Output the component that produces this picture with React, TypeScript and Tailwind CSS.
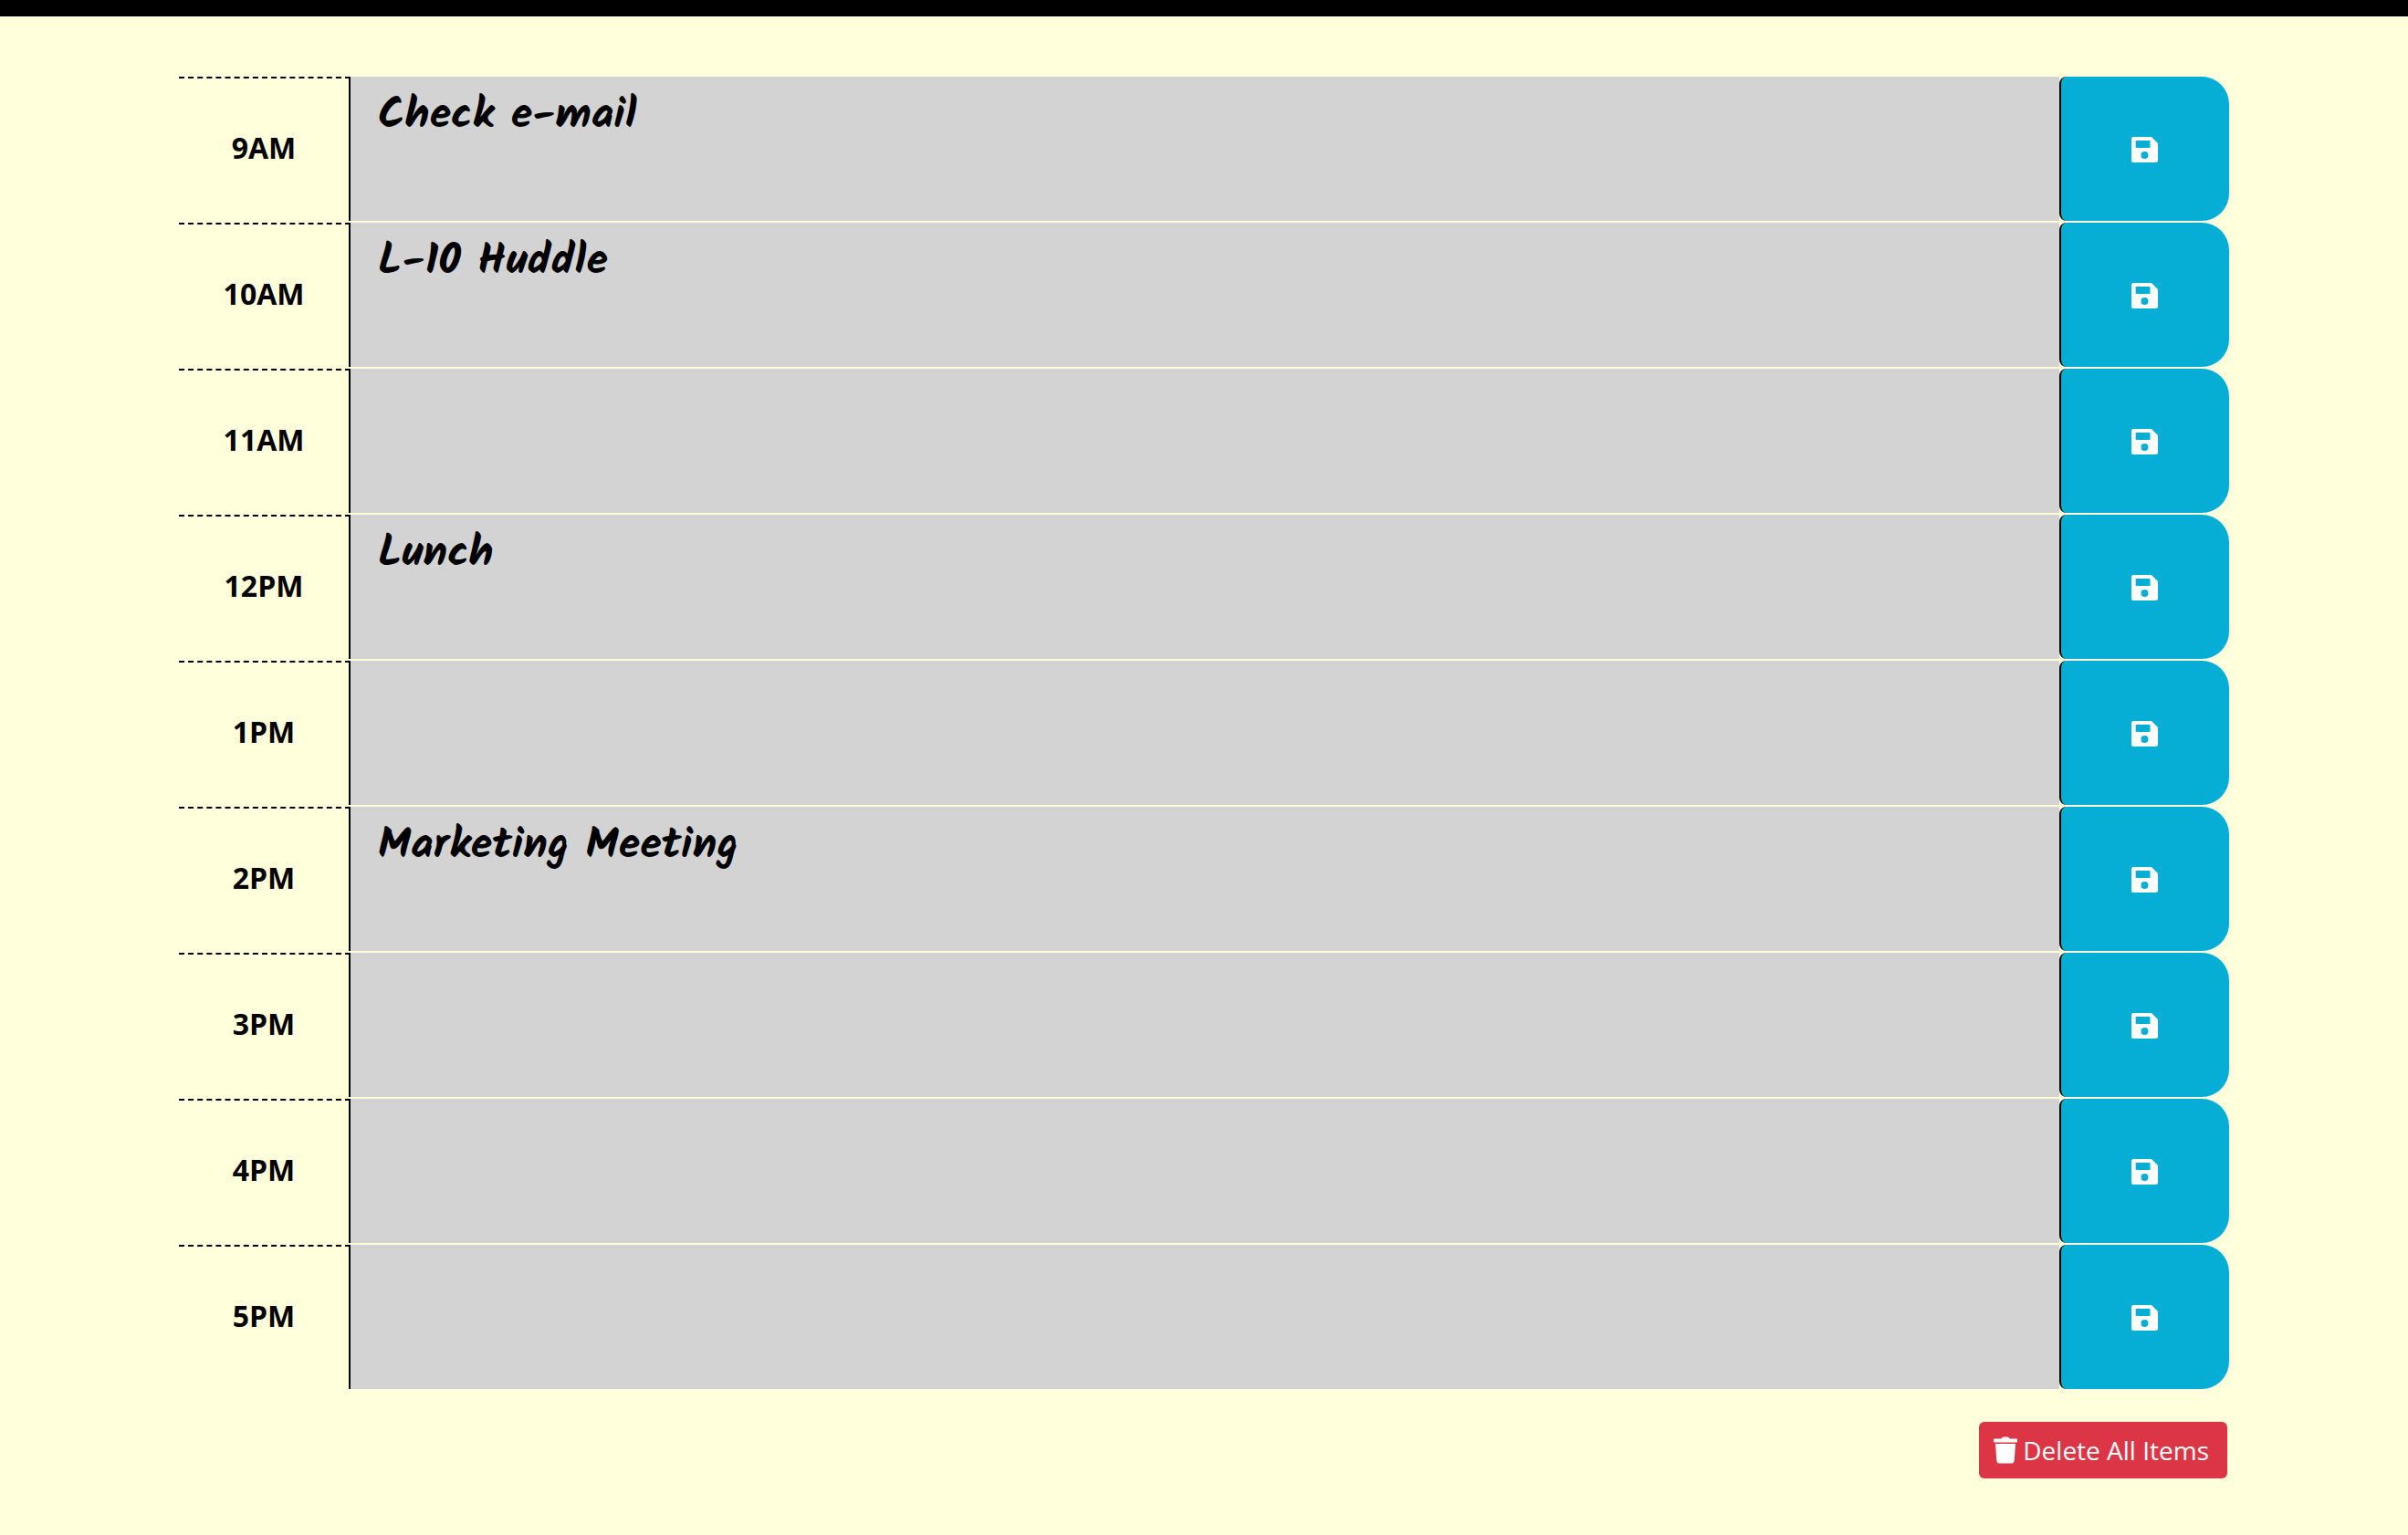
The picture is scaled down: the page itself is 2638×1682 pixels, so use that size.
import { useState } from "react";

type Slot = { hour: string; text: string };

const initialSlots: Slot[] = [
  { hour: "9AM", text: "Check e-mail" },
  { hour: "10AM", text: "L-10 Huddle" },
  { hour: "11AM", text: "" },
  { hour: "12PM", text: "Lunch" },
  { hour: "1PM", text: "" },
  { hour: "2PM", text: "Marketing Meeting" },
  { hour: "3PM", text: "" },
  { hour: "4PM", text: "" },
  { hour: "5PM", text: "" },
];

function SaveIcon() {
  return (
    <svg viewBox="0 0 29 28" className="h-7 w-[29px]" fill="currentColor" aria-hidden="true">
      <path
        fillRule="evenodd"
        d="M2.500 0H22l7 7v18.500q0 2.500-2.500 2.500h-24Q0 28 0 25.500v-23Q0 0 2.500 0ZM5.300 4q-.6 0-.6.6v6.800q0 .6.6.6h14.600q.6 0 .6-.6V4.600q0-.6-.6-.6ZM14.500 16a4 4 0 1 0 0 8a4 4 0 1 0 0-8Z"
      />
    </svg>
  );
}

function TrashIcon() {
  return (
    <svg viewBox="0 0 26 30" className="h-[30px] w-[26px]" fill="currentColor" aria-hidden="true">
      <path d="M1 2.500h7.500q.4-1.900 2.500-1.900h4q2.100 0 2.500 1.900H25q1 0 1 1v2q0 1-1 1H1q-1 0-1-1v-2q0-1 1-1Z" />
      <path d="M2 8h22l-1.300 19q-.2 2.400-2.600 2.400H5.900q-2.400 0-2.600-2.400Z" />
    </svg>
  );
}

function TimeBlock({ slot, onChange }: { slot: Slot; onChange: (text: string) => void }) {
  const id = `slot-${slot.hour}`;
  return (
    <div className="grid h-[158px] grid-cols-[188px_1fr_186px]">
      <label
        htmlFor={id}
        className="flex items-center justify-center border-t-2 border-r-2 border-t-black border-r-black pb-1 [border-top-style:dashed] text-[32px] leading-[48px] font-bold"
      >
        {slot.hour}
      </label>
      <textarea
        id={id}
        value={slot.text}
        onChange={(e) => onChange(e.target.value)}
        className="block h-full w-full resize-none bg-[#d3d3d3] px-[30px] py-[7px] font-['Kalam',cursive] text-[48px] leading-[72px] font-bold text-black outline-none"
      />
      <button
        type="button"
        aria-label={`Save ${slot.hour}`}
        className="flex items-center justify-center rounded-l-lg rounded-r-[30px] border-l-2 border-black bg-[#06aed5] pt-0.5 pr-0.5 text-white"
      >
        <SaveIcon />
      </button>
    </div>
  );
}

export default function App() {
  const [slots, setSlots] = useState(initialSlots);
  const update = (i: number, text: string) =>
    setSlots(slots.map((s, n) => (n === i ? { ...s, text } : s)));

  return (
    <div className="min-h-screen border-t-[18px] border-black bg-[#ffffdc] font-['Open_Sans',sans-serif] text-black">
      <main className="px-[196px] pt-[66px]">
        <div className="flex flex-col gap-0.5">
          {slots.map((slot, i) => (
            <TimeBlock key={slot.hour} slot={slot} onChange={(t) => update(i, t)} />
          ))}
        </div>
        <div className="mt-9 flex justify-end pr-0.5">
          <button
            type="button"
            onClick={() => setSlots(slots.map((s) => ({ ...s, text: "" })))}
            className="flex h-[62px] items-center gap-1.5 rounded-md bg-[#dc3545] pr-5 pl-4 text-[28px] leading-[42px] text-white"
          >
            <TrashIcon />
            Delete All Items
          </button>
        </div>
      </main>
    </div>
  );
}
